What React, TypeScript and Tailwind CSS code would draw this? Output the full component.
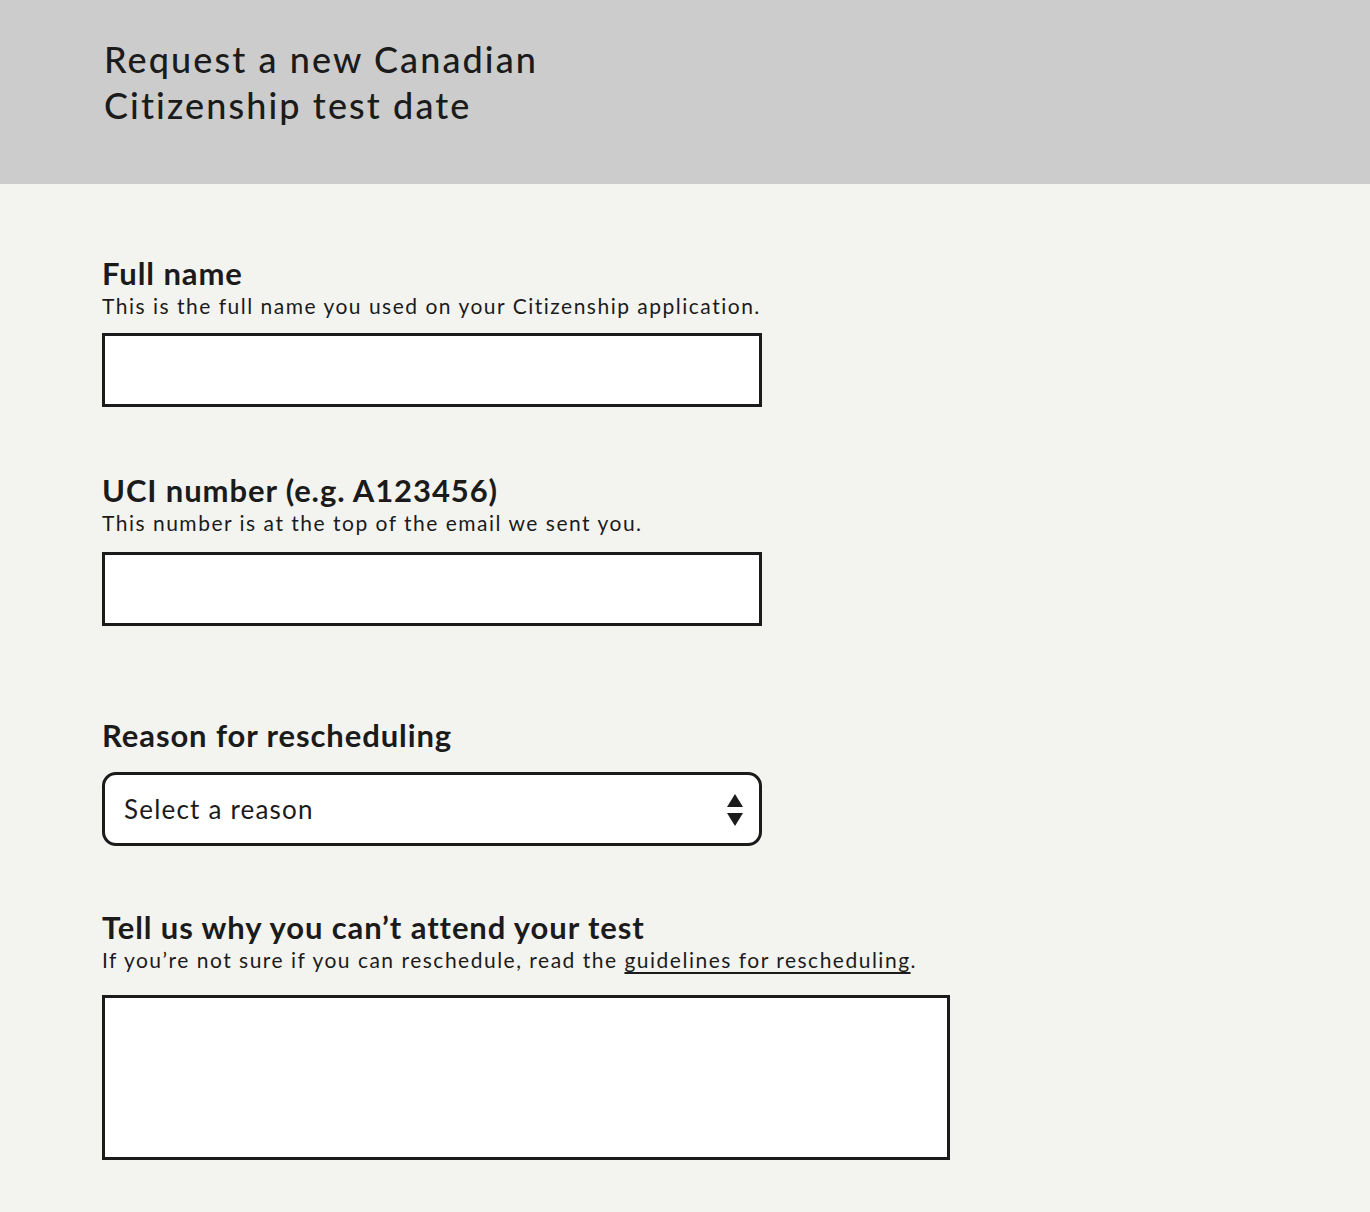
import React from "react";

const font = { fontFamily: "Lato, 'Noto Sans', sans-serif" };

function Field({
  label,
  hint,
  children,
}: {
  label: string;
  hint?: React.ReactNode;
  children: React.ReactNode;
}) {
  return (
    <div className="flex flex-col">
      <label className="text-[31px] font-bold leading-[34px] tracking-[0.9px] text-[#1b1b1b]">{label}</label>
      {hint && <p className="text-[21px] leading-[32px] tracking-[1.5px] text-[#1b1b1b]">{hint}</p>}
      {children}
    </div>
  );
}

export default function App() {
  return (
    <div className="min-h-[1212px] bg-[#f3f4f0]" style={font}>
      <header className="h-[184px] bg-[#cccccc] px-[104px] pt-[36px]">
        <h1 className="text-[36px] font-medium leading-[46px] tracking-[2.1px] text-[#1b1b1b]">
          Request a new Canadian
          <br />
          Citizenship test date
        </h1>
      </header>

      <main className="flex flex-col px-[102px] pt-[72px]">
        <Field label="Full name" hint="This is the full name you used on your Citizenship application.">
          <input
            type="text"
            className="mt-[11px] h-[74px] w-[660px] border-[3px] border-[#1b1b1b] bg-white"
          />
        </Field>

        <div className="mt-[66px]">
          <Field label="UCI number (e.g. A123456)" hint="This number is at the top of the email we sent you.">
            <input
              type="text"
              className="mt-[13px] h-[74px] w-[660px] border-[3px] border-[#1b1b1b] bg-white"
            />
          </Field>
        </div>

        <div className="mt-[92px]">
          <Field label="Reason for rescheduling">
            <div className="relative mt-[20px] flex h-[74px] w-[660px] items-center rounded-[14px] border-[3px] border-[#1b1b1b] bg-white pl-[19px]">
              <span className="text-[26px] tracking-[1.2px] text-[#1b1b1b]">Select a reason</span>
              <svg className="absolute right-[16px] top-[19px]" width="16" height="32" viewBox="0 0 16 32">
                <path d="M8 0 L16 13 L0 13 Z" fill="#1b1b1b" />
                <path d="M0 19 L16 19 L8 32 Z" fill="#1b1b1b" />
              </svg>
            </div>
          </Field>
        </div>

        <div className="mt-[64px]">
          <Field
            label="Tell us why you can’t attend your test"
            hint={
              <>
                If you’re not sure if you can reschedule, read the{" "}
                <a href="#" className="underline underline-offset-[4px]">
                  guidelines for rescheduling
                </a>
                .
              </>
            }
          >
            <textarea className="mt-[19px] h-[165px] w-[848px] resize-none border-[3px] border-[#1b1b1b] bg-white" />
          </Field>
        </div>
      </main>
    </div>
  );
}
